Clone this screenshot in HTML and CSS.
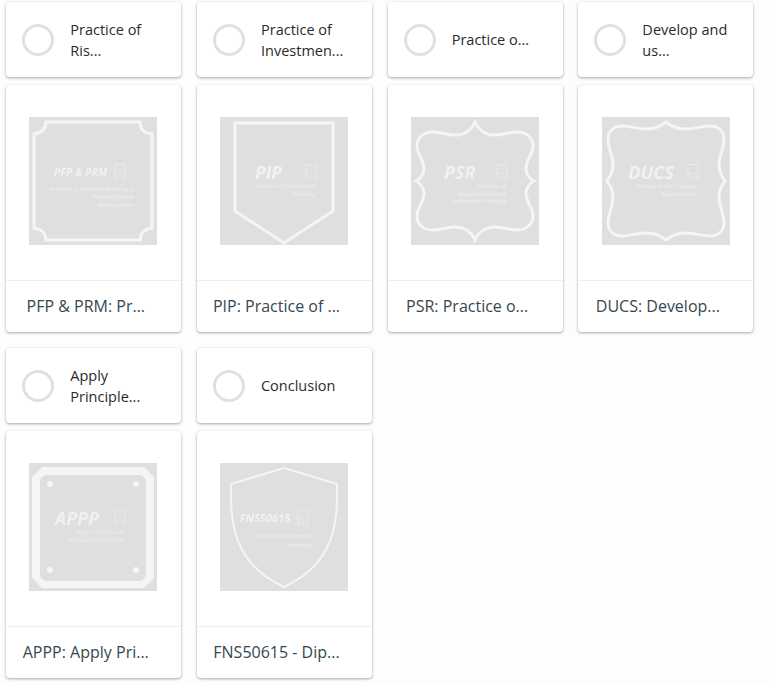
FILE: index.html
```html
<!DOCTYPE html>
<html lang="en">
<head>
    <meta charset="UTF-8">
    <meta name="viewport" content="width=device-width, initial-scale=1.0">
    <title>Course modules</title>
    <link rel="stylesheet" href="styles.css">
</head>
<body>
    <div class="modulos">

        <!-- Fila 1 -->
        <div class="modulo">
            <div class="tarjeta paso">
                <span class="circulo"></span>
                <p class="paso-titulo">Practice of Ris...</p>
            </div>
            <div class="tarjeta curso">
                <div class="curso-imagen">
                    <svg class="insignia" viewBox="0 0 128 128">
                        <defs>
                            <symbol id="marca" viewBox="0 0 12 16">
                                <path d="M1 .5H11V15.5L6 12.5 1 15.5Z M1 11 6 8 11 11"/>
                            </symbol>
                        </defs>
                        <path class="linea" d="M17 5H111Q111 16 123 17V111Q112 112 111 123H17Q16 112 5 111V17Q16 16 17 5Z"/>
                        <text class="sigla" x="25" y="59" font-size="10.5">PFP &amp; PRM</text>
                        <use class="marca" href="#marca" x="85" y="47" width="12" height="16"/>
                        <text class="detalle" x="105" y="74">Practice of Financial Planning &amp;</text>
                        <text class="detalle" x="105" y="82">Practice Of Risk</text>
                        <text class="detalle" x="104" y="90">Management</text>
                    </svg>
                </div>
                <p class="curso-titulo">PFP &amp; PRM: Pr...</p>
            </div>
        </div>

        <div class="modulo">
            <div class="tarjeta paso">
                <span class="circulo"></span>
                <p class="paso-titulo">Practice of Investmen...</p>
            </div>
            <div class="tarjeta curso">
                <div class="curso-imagen">
                    <svg class="insignia" viewBox="0 0 128 128">
                        <path class="linea" d="M15 6H113V94L64 126 15 94Z"/>
                        <text class="sigla" x="35" y="62" font-size="17.5">PIP</text>
                        <use class="marca" href="#marca" x="85" y="47" width="12" height="16"/>
                        <text class="detalle" x="95" y="71">Practice of Investment</text>
                        <text class="detalle" x="95" y="79">Planning</text>
                    </svg>
                </div>
                <p class="curso-titulo">PIP: Practice of ...</p>
            </div>
        </div>

        <div class="modulo">
            <div class="tarjeta paso">
                <span class="circulo"></span>
                <p class="paso-titulo">Practice o...</p>
            </div>
            <div class="tarjeta curso">
                <div class="curso-imagen">
                    <svg class="insignia" viewBox="0 0 128 128">
                        <path class="linea" d="M64 5C68 14 76 18 84 18C92 18 98 15 106 15C116 15 122 21 122 29C122 38 115 42 115 52C115 57 119 62 123 64C119 66 115 71 115 76C115 86 122 90 122 99C122 107 116 113 106 113C98 113 92 110 84 110C76 110 68 114 64 123C60 114 52 110 44 110C36 110 30 113 22 113C12 113 6 107 6 99C6 90 13 86 13 76C13 71 9 66 5 64C9 62 13 57 13 52C13 42 6 38 6 29C6 21 12 15 22 15C30 15 36 18 44 18C52 18 60 14 64 5Z"/>
                        <text class="sigla" x="33" y="62" font-size="18">PSR</text>
                        <use class="marca" href="#marca" x="85" y="47" width="12" height="16"/>
                        <text class="detalle" x="95" y="71">Practice of</text>
                        <text class="detalle" x="95" y="79">Superannuation &amp;</text>
                        <text class="detalle" x="95" y="86">Retirement Planning</text>
                    </svg>
                </div>
                <p class="curso-titulo">PSR: Practice o...</p>
            </div>
        </div>

        <div class="modulo">
            <div class="tarjeta paso">
                <span class="circulo"></span>
                <p class="paso-titulo">Develop and us...</p>
            </div>
            <div class="tarjeta curso">
                <div class="curso-imagen">
                    <svg class="insignia" viewBox="0 0 128 128">
                        <path class="linea" d="M64 5C70 10 76 12 84 12C94 12 100 9 108 9C116 9 122 14 122 22C122 32 117 38 117 48C117 55 120 60 123 64C120 68 117 73 117 80C117 90 122 96 122 106C122 114 116 119 108 119C100 119 94 116 84 116C76 116 70 118 64 123C58 118 52 116 44 116C34 116 28 119 20 119C12 119 6 114 6 106C6 96 11 90 11 80C11 73 8 68 5 64C8 60 11 55 11 48C11 38 6 32 6 22C6 14 12 9 20 9C28 9 34 12 44 12C52 12 58 10 64 5Z"/>
                        <text class="sigla" x="26" y="62" font-size="18.5">DUCS</text>
                        <use class="marca" href="#marca" x="85" y="47" width="12" height="16"/>
                        <text class="detalle" x="95" y="71">Develop &amp; Use Complex</text>
                        <text class="detalle" x="95" y="79">Spreadsheets</text>
                    </svg>
                </div>
                <p class="curso-titulo">DUCS: Develop...</p>
            </div>
        </div>

        <!-- Fila 2 -->
        <div class="modulo">
            <div class="tarjeta paso">
                <span class="circulo"></span>
                <p class="paso-titulo">Apply Principle...</p>
            </div>
            <div class="tarjeta curso">
                <div class="curso-imagen">
                    <svg class="insignia" viewBox="0 0 128 128">
                        <path class="relleno" fill-rule="evenodd" d="M13 4H115L125 14V115L115 125H13L3 115V14Z M18 12A7 7 0 0 0 11 19V111A7 7 0 0 0 18 118H110A7 7 0 0 0 117 111V19A7 7 0 0 0 110 12Z"/>
                        <circle class="relleno" cx="21" cy="21" r="3"/>
                        <circle class="relleno" cx="107" cy="21" r="3"/>
                        <circle class="relleno" cx="21" cy="107" r="3"/>
                        <circle class="relleno" cx="107" cy="107" r="3"/>
                        <text class="sigla" x="26" y="62" font-size="18">APPP</text>
                        <use class="marca" href="#marca" x="85" y="47" width="12" height="16"/>
                        <text class="detalle" x="95" y="71">Apply Principles of</text>
                        <text class="detalle" x="95" y="79">Professional Practice</text>
                    </svg>
                </div>
                <p class="curso-titulo">APPP: Apply Pri...</p>
            </div>
        </div>

        <div class="modulo">
            <div class="tarjeta paso">
                <span class="circulo"></span>
                <p class="paso-titulo">Conclusion</p>
            </div>
            <div class="tarjeta curso">
                <div class="curso-imagen">
                    <svg class="insignia" viewBox="0 0 128 128">
                        <path class="linea linea-fina" d="M64 5L117 21C118 60 115 100 64 124C13 100 10 60 11 21Z"/>
                        <text class="sigla" x="20" y="59" font-size="11">FNS50615</text>
                        <use class="marca" href="#marca" x="77" y="47" width="12" height="16"/>
                        <text class="detalle" x="91" y="75">Diploma of Financial</text>
                        <text class="detalle" x="91" y="84">Planning</text>
                    </svg>
                </div>
                <p class="curso-titulo">FNS50615 - Dip...</p>
            </div>
        </div>

    </div>
</body>
</html>
```

FILE: styles.css
```css
body {
    margin: 0;
    padding: 2px 0 6px 6.3px;
    background-color: #fdfdfd;
    font-family: "Open Sans", "Liberation Sans", sans-serif;
}

.modulos {
    display: grid;
    grid-template-columns: repeat(4, 175px);
    column-gap: 15.7px;
    row-gap: 16px;
}

.modulo {
    display: flex;
    flex-direction: column;
    gap: 8px;
}

.tarjeta {
    background-color: white;
    border-radius: 4px;
    box-shadow: 0 1px 3px rgba(0, 0, 0, 0.35);
}

/* Tarjeta del paso con circulo */
.paso {
    display: flex;
    align-items: center;
    gap: 16px;
    height: 75px;
    padding: 0 16px;
}

.circulo {
    flex: none;
    box-sizing: border-box;
    width: 32px;
    height: 32px;
    border: 3px solid #e0e0e0;
    border-radius: 50%;
}

.paso-titulo {
    margin: 0;
    font-size: 14.5px;
    line-height: 21px;
    color: #2b2b2b;
}

/* Tarjeta del curso con insignia */
.curso {
    display: flex;
    flex-direction: column;
    height: 247px;
}

.curso-imagen {
    box-sizing: border-box;
    height: 196px;
    padding: 32px 0 0 23.15px;
    border-bottom: 1px solid #eee;
}

.insignia {
    display: block;
    width: 128px;
    height: 128px;
    background-color: #dfdfdf;
}

.curso-titulo {
    margin: 0;
    padding-right: 16px;
    font-size: 16px;
    line-height: 51px;
    text-align: center;
    color: #37474f;
}

.linea {
    fill: none;
    stroke: #f5f5f5;
    stroke-width: 3;
    filter: blur(0.3px);
}

.linea-fina {
    stroke-width: 2;
}

.relleno {
    fill: #f5f5f5;
    filter: blur(0.3px);
}

.sigla {
    font-style: italic;
    font-weight: 700;
    fill: #f1f1f1;
    filter: blur(0.3px);
}

.detalle {
    font-size: 5.8px;
    font-style: italic;
    font-weight: 600;
    text-anchor: end;
    fill: #ebebeb;
    filter: blur(0.3px);
}

.marca {
    fill: none;
    stroke: #ececec;
    stroke-width: 0.8;
}
```
